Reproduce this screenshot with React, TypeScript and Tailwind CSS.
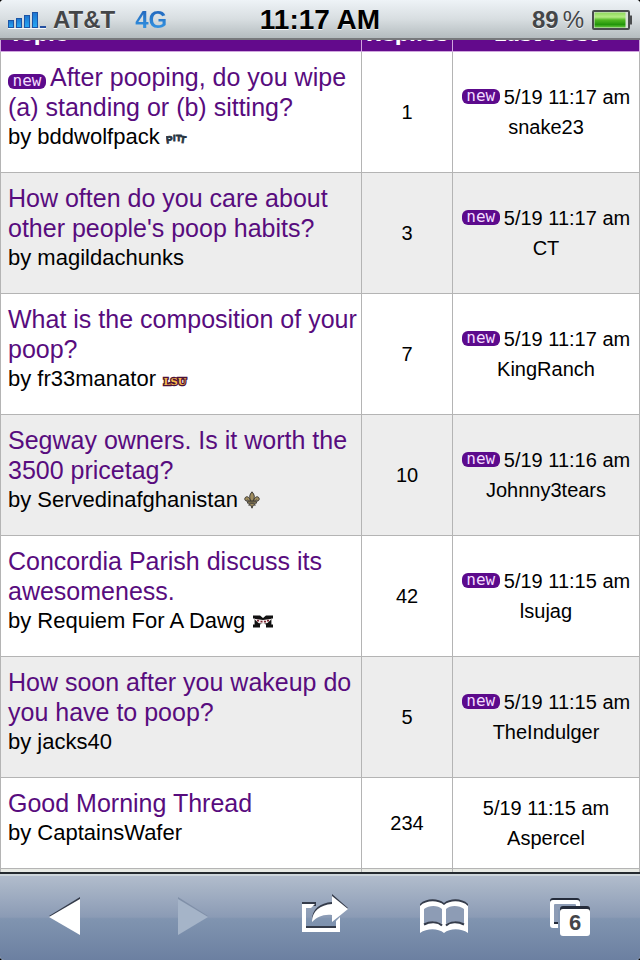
import type { ReactNode } from "react";

type Thread = {
  title: string;
  author: string;
  replies: number;
  time: string;
  lastBy: string;
  isNew?: boolean;
  newTitle?: boolean;
  team?: ReactNode;
};

const PittIcon = () => (
  <svg className="mt-1 inline-block" width="22" height="12" viewBox="0 0 22 12">
    <g
      fill="#27343f"
      stroke="#27343f"
      strokeWidth="0.8"
      fontFamily="Liberation Sans, sans-serif"
      fontWeight="700"
    >
      <text x="0" y="10" fontSize="10" transform="rotate(-8 4 6)">P</text>
      <text x="7" y="8" fontSize="9">I</text>
      <text x="10" y="8" fontSize="9">T</text>
      <text x="14" y="10" fontSize="10" transform="rotate(8 18 6)">T</text>
    </g>
  </svg>
);

const LsuIcon = () => (
  <svg className="mt-1 inline-block" width="26" height="12" viewBox="0 0 26 12">
    <text
      x="13"
      y="10"
      textAnchor="middle"
      fontSize="10"
      fontWeight="700"
      fontFamily="DejaVu Serif, serif"
      fill="#f7b94a"
      stroke="#4b1238"
      strokeWidth="2.4"
      paintOrder="stroke"
    >
      LSU
    </text>
  </svg>
);

const SaintsIcon = () => (
  <svg className="inline-block" width="16" height="18" viewBox="0 0 16 18">
    <g fill="#a08d5e" stroke="#3d3a35" strokeWidth="1">
      <path d="M8 .8C5.4 4 5 6 7 10.2h2C11 6 10.6 4 8 .8Z" />
      <path d="M6.6 10.2C5.8 6.8 3.6 4.8 1.6 6.2.2 7.4.6 9.6 2.6 10.2 2.6 8.8 3.6 8.4 4.6 10.2Z" />
      <path d="M9.4 10.2c.8-3.4 3-5.4 5-4 1.4 1.2 1 3.4-1 4 0-1.4-1-1.8-2 0Z" />
      <path d="M3.6 10.2h8.8v2H3.6Z" />
      <path d="M6.6 12.2 4.6 14l2.2.2L8 17.2l1.2-3 2.2-.2-2-1.8Z" />
    </g>
  </svg>
);

const BulldogsIcon = () => (
  <svg className="ml-0.5 inline-block" width="20" height="13" viewBox="0 0 20 13">
    <path
      d="M0 .5h7L10 3l3-2.5h7v3h-1.6v6H20v3h-7v-3L10 8l-3 1.5v3H0v-3h1.6v-6H0Z"
      fill="#111"
    />
    <path d="M1 3.8 10 5l9-1.2L14.5 8 10 9 5.5 8Z" fill="#f5eeee" />
    <path d="M4 5.6h2M7.5 6.6h2M11 6.6h2M14 5.6h2" stroke="#7a2430" strokeWidth="1.6" />
  </svg>
);

const threads: Thread[] = [
  {
    title: "After pooping, do you wipe (a) standing or (b) sitting?",
    author: "bddwolfpack",
    replies: 1,
    time: "5/19 11:17 am",
    lastBy: "snake23",
    isNew: true,
    newTitle: true,
    team: <PittIcon />,
  },
  {
    title: "How often do you care about other people's poop habits?",
    author: "magildachunks",
    replies: 3,
    time: "5/19 11:17 am",
    lastBy: "CT",
    isNew: true,
  },
  {
    title: "What is the composition of your poop?",
    author: "fr33manator",
    replies: 7,
    time: "5/19 11:17 am",
    lastBy: "KingRanch",
    isNew: true,
    team: <LsuIcon />,
  },
  {
    title: "Segway owners. Is it worth the 3500 pricetag?",
    author: "Servedinafghanistan",
    replies: 10,
    time: "5/19 11:16 am",
    lastBy: "Johnny3tears",
    isNew: true,
    team: <SaintsIcon />,
  },
  {
    title: "Concordia Parish discuss its awesomeness.",
    author: "Requiem For A Dawg",
    replies: 42,
    time: "5/19 11:15 am",
    lastBy: "lsujag",
    isNew: true,
    team: <BulldogsIcon />,
  },
  {
    title: "How soon after you wakeup do you have to poop?",
    author: "jacks40",
    replies: 5,
    time: "5/19 11:15 am",
    lastBy: "TheIndulger",
    isNew: true,
  },
  {
    title: "Good Morning Thread",
    author: "CaptainsWafer",
    replies: 234,
    time: "5/19 11:15 am",
    lastBy: "Aspercel",
  },
];

function NewBadge({ className }: { className: string }) {
  return (
    <span
      className={`mr-1 inline-block h-[15px] w-[38px] overflow-hidden rounded-md bg-[#5c0a8c] text-center font-['DejaVu_Sans_Mono',monospace] text-[16px] leading-[14px] text-[#f3dcff] ${className}`}
    >
      new
    </span>
  );
}

function StatusBar() {
  return (
    <header className="grid h-10 shrink-0 grid-cols-[1fr_auto_1fr] items-center border-b-2 border-[#77797c] bg-linear-to-b from-[#eef3f7] via-[#d8dee1] to-[#b4bcbf] px-2 text-[24px] leading-10 font-bold text-[#444648] [text-shadow:0_1px_0_#f5f8fa]">
      <div className="flex items-center">
        <svg width="38" height="18" viewBox="0 0 38 18" aria-label="Signal">
          <defs>
            <linearGradient id="bar" x1="0" y1="0" x2="0" y2="1">
              <stop offset="0" stopColor="#1d74cf" />
              <stop offset="1" stopColor="#27a9f5" />
            </linearGradient>
          </defs>
          <path d="M0 17.5h38" stroke="#f7fafc" />
          <g fill="url(#bar)" stroke="#1d55a5" strokeWidth="1">
            <rect x=".5" y="9.5" width="5" height="7" />
            <rect x="8.5" y="7.5" width="5" height="9" />
            <rect x="16.5" y="4.5" width="5" height="12" />
            <rect x="24.5" y="1.5" width="5" height="15" />
          </g>
          <rect x="32" y="15" width="6" height="2" fill="#2450a0" />
        </svg>
        <span className="ml-[7px]">AT&amp;T</span>
        <span className="ml-5 bg-linear-to-b from-[#1b4fa8] to-[#3fb0fa] bg-clip-text text-transparent [text-shadow:none]">
          4G
        </span>
      </div>
      <span className="text-[28px] text-black">11:17 AM</span>
      <div className="flex items-center justify-end">
        <span>89</span>
        <span className="ml-1 font-normal">%</span>
        <svg className="ml-1.5" width="42" height="21" viewBox="0 0 42 21" aria-label="Battery">
          <defs>
            <linearGradient id="charge" x1="0" y1="0" x2="0" y2="1">
              <stop offset="0" stopColor="#8fd95c" />
              <stop offset=".3" stopColor="#b5ec83" />
              <stop offset=".5" stopColor="#51b823" />
              <stop offset=".8" stopColor="#23960b" />
              <stop offset="1" stopColor="#63c83a" />
            </linearGradient>
          </defs>
          <rect x="3" y="1" width="36" height="18" rx="1" fill="#d8dfd8" stroke="#4a4d4e" strokeWidth="2" />
          <rect x="4.5" y="2.5" width="31" height="15" fill="url(#charge)" />
          <path d="M39 6.5h2v7h-2" fill="none" stroke="#4a4d4e" strokeWidth="2" />
        </svg>
      </div>
    </header>
  );
}

function ThreadTable() {
  return (
    <table className="-mt-[29px] w-full table-fixed border-collapse text-black">
      <colgroup>
        <col />
        <col className="w-[91px]" />
        <col className="w-[187px]" />
      </colgroup>
      <thead>
        <tr className="h-10 bg-[#630a8c] align-bottom font-['DejaVu_Sans',sans-serif] text-[20px] leading-[30px] text-white">
          <th className="border border-[#d0a6de] px-2 pb-0.5 text-left">Topic</th>
          <th className="border border-[#d0a6de] pb-0.5">Replies</th>
          <th className="border border-[#d0a6de] pb-0.5">Last Post</th>
        </tr>
      </thead>
      <tbody className="text-[20px] leading-[30px]">
        {threads.map((t) => (
          <tr key={t.title} className="bg-white even:bg-[#ededed]">
            <td className="border border-[#b4b4b4] pt-2.5 pr-0.5 pb-5 pl-[7px]">
              <div className="text-[25px] leading-[30px]">
                {t.newTitle && <NewBadge className="align-[-3px]" />}
                <a href="#" className="text-[#580c7e]">
                  {t.title}
                </a>
              </div>
              <div className="flex items-center gap-1.5 text-[22px] leading-[30px]">
                <span>by {t.author}</span>
                {t.team}
              </div>
            </td>
            <td className="border border-[#b4b4b4] text-center">{t.replies}</td>
            <td className="border border-[#b4b4b4] text-center">
              <div className="whitespace-nowrap">
                {t.isNew && <NewBadge className="align-baseline" />}
                {t.time}
              </div>
              <div>{t.lastBy}</div>
            </td>
          </tr>
        ))}
        <tr className="h-10 bg-[#e8eae4]">
          <td className="border border-[#b4b4b4]" />
          <td className="border border-[#b4b4b4]" />
          <td className="border border-[#b4b4b4]" />
        </tr>
      </tbody>
    </table>
  );
}

function ToolButton({ label, children }: { label: string; children: ReactNode }) {
  return (
    <button type="button" aria-label={label} className="flex flex-1 items-center justify-center">
      <svg width="64" height="48" viewBox="0 0 64 48">
        {children}
      </svg>
    </button>
  );
}

function Toolbar() {
  return (
    <nav className="flex h-22 shrink-0 border-t-2 border-[#242a2e] bg-[linear-gradient(#b3becd,#8b9bb5_50%,#8094b0_52%,#6c80a1)] shadow-[inset_0_2px_0_#cdd5da]">
      <ToolButton label="Back">
        <path d="M17 23 48 4v37Z" fill="#343b4a" />
        <path d="M17 24 48 6v36Z" fill="#fff" />
      </ToolButton>
      <ToolButton label="Forward">
        <path d="M48 23 18 4v37Z" fill="#8090a8" />
        <path d="M48 24 18 6v36Z" fill="#a5b4c8" />
      </ToolButton>
      <ToolButton label="Share">
        <g fill="#343b4a">
          <path d="M14 9h14v4H14ZM18 33h30v3H18ZM48 29l4-3v4h-4Z" />
          <path d="M24 27C24 16 32 10 44 9V1l16 14-16 12v-6c-9-1-15 1-20 6Z" />
        </g>
        <g fill="#fff">
          <path d="M14 11h13l-4 4h-5v20h30v-7l4-4v15H14Z" />
          <path d="M24 29C24 18 32 12 44 11V3l16 13-16 13v-7c-9-1-15 2-20 7Z" />
        </g>
      </ToolButton>
      <ToolButton label="Bookmarks">
        <g fill="#343b4a">
          <path d="M4 11c6-6 18-6 24-1 6-5 18-5 24 1v4H4Z" />
        </g>
        <path
          fill="#fff"
          d="M4 13c6-6 18-6 24-1 6-5 18-5 24 1v27c-7-5-18-5-24 0-6-5-17-5-24 0Z"
        />
        <path
          fill="#8d9cb5"
          d="M8 16c5-4 14-4 18 0v15c-5-3-13-3-18 0ZM48 16c-5-4-14-4-18 0v15c5-3 13-3 18 0Z"
        />
        <path d="M8 31.5c6-3 14-3 18 1M48 31.5c-6-3-14-3-18 1" fill="none" stroke="#343b4a" strokeWidth="2" />
      </ToolButton>
      <ToolButton label="Tabs">
        <rect x="6" y="5" width="30" height="27" rx="3" fill="#252c3b" />
        <rect x="6" y="7" width="30" height="28" rx="3" fill="#fff" />
        <rect x="10" y="11" width="22" height="20" rx="1" fill="#8d9cb5" />
        <path d="M10 29h5v2h-5Z" fill="#252c3b" />
        <path d="M14 16h4v19h-4Z" fill="#8497b3" />
        <rect x="16" y="13" width="30" height="28" rx="3" fill="#252c3b" />
        <rect x="16" y="16" width="30" height="27" rx="3" fill="#fff" />
        <text
          x="31"
          y="37"
          textAnchor="middle"
          fontSize="22"
          fontWeight="700"
          fontFamily="Liberation Sans, sans-serif"
          fill="#444549"
        >
          6
        </text>
      </ToolButton>
    </nav>
  );
}

function App() {
  return (
    <div className="h-screen bg-black">
      <div className="flex h-full flex-col overflow-hidden rounded-sm bg-white font-['Liberation_Sans',Arial,sans-serif]">
        <StatusBar />
        <main className="min-h-0 flex-1 overflow-hidden">
          <ThreadTable />
        </main>
        <Toolbar />
      </div>
    </div>
  );
}

export default App;
